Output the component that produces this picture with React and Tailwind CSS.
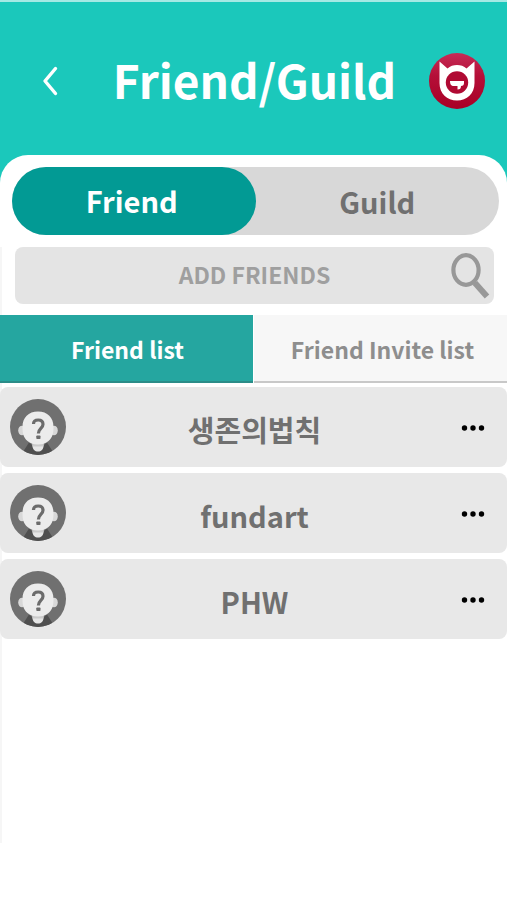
import { useState } from 'react'

const FRIENDS = [
  { id: 1, name: '생존의법칙' },
  { id: 2, name: 'fundart' },
  { id: 3, name: 'PHW' },
]

function BackIcon() {
  return (
    <svg className="w-6 h-8" viewBox="0 0 24 32" fill="none" stroke="currentColor" strokeWidth="3.4" strokeLinecap="round" strokeLinejoin="round">
      <path d="M17.500 3.500 7 16 17.500 28.500" />
    </svg>
  )
}

function MonsterLogo() {
  return (
    <svg className="w-14 h-14" viewBox="0 0 56 56">
      <defs>
        <linearGradient id="badge" x1="0" y1="0" x2="0" y2="1">
          <stop offset="0" stopColor="#c62c57" />
          <stop offset="0.4" stopColor="#b50f38" />
          <stop offset="1" stopColor="#a80026" />
        </linearGradient>
      </defs>
      <circle cx="28" cy="28" r="28" fill="url(#badge)" />
      <path
        d="M10.500 8.500 18.500 15.500C21 13 24.500 12 28 12S35 13 37.500 15.500L45.500 8.500V30
           C45.500 40.500 38 47.500 28 47.500S10.500 40.500 10.500 30Z"
        fill="#fff"
      />
      <circle cx="28" cy="29.500" r="11.200" fill="#b00a33" />
      <path d="M21 28H35V30C35 32 34 33 32 33C32 35.500 31 36.500 28.500 36.500V33H25C22 33 21 31 21 28Z" fill="#fff" />
    </svg>
  )
}

function SearchIcon() {
  return (
    <svg className="w-10 h-12" viewBox="0 0 40 48" fill="none" stroke="currentColor">
      <ellipse cx="16" cy="18" rx="12.600" ry="14.800" strokeWidth="4.200" />
      <path d="M23.500 29.500 26 32.500" strokeWidth="4" />
      <path d="M25 31 37 44.500" strokeWidth="6" />
    </svg>
  )
}

function Avatar() {
  return (
    <svg className="w-14 h-14 shrink-0" viewBox="0 0 56 56">
      <defs>
        <clipPath id="face">
          <circle cx="28" cy="28" r="28" />
        </clipPath>
      </defs>
      <g clipPath="url(#face)">
        <rect width="56" height="56" fill="#707070" />
        <path d="M11 56 19 43.500 23 47H33L37 43.500 45 56Z" fill="#4f4f4f" />
        <path d="M22.500 44H33.500V47C33.500 50.500 31 52.500 28 52.500S22.500 50.500 22.500 47Z" fill="#e6e6e6" />
        <path d="M22.500 44.500H33.500V47.500H22.500Z" fill="#cbcbcb" />
        <ellipse cx="12" cy="31.500" rx="3.800" ry="4.800" fill="#d8d8d8" />
        <ellipse cx="44" cy="31.500" rx="3.800" ry="4.800" fill="#d8d8d8" />
        <path d="M28 12.500C37.500 12.500 43.500 18.500 43.500 28C43.500 34.500 42.500 38.500 38.500 42C36 44.500 32 45.500 28 45.500S20 44.500 17.500 42C13.500 38.500 12.500 34.500 12.500 28C12.500 18.500 18.500 12.500 28 12.500Z" fill="#ececec" />
      </g>
      <path d="M23.500 25C23.500 22.500 25.300 21 28.200 21S33 22.600 33 25.200C33 29.500 28.400 29.500 28.400 34.500" fill="none" stroke="#6c6c6c" strokeWidth="3.200" />
      <rect x="26.300" y="36.500" width="4.200" height="3.600" rx="0.800" fill="#6c6c6c" />
    </svg>
  )
}

function MoreIcon() {
  return (
    <svg className="w-6 h-6" viewBox="0 0 24 24" fill="currentColor">
      <circle cx="3.500" cy="13" r="2.700" />
      <circle cx="12" cy="13" r="2.700" />
      <circle cx="20.500" cy="13" r="2.700" />
    </svg>
  )
}

function FriendRow({ name }) {
  return (
    <li className="grid grid-cols-[56px_1fr_56px] items-center h-20 px-2.5 rounded-lg bg-[#e8e8e8]">
      <Avatar />
      <span className="pt-1 pl-0.5 text-center text-[29px] leading-10 font-bold text-[#707070]">{name}</span>
      <button type="button" aria-label={`Options for ${name}`} className="flex justify-center pl-2 text-black">
        <MoreIcon />
      </button>
    </li>
  )
}

export default function App() {
  const [section, setSection] = useState('friend')
  const [list, setList] = useState('friends')

  return (
    <div className="min-h-screen bg-white font-['Noto_Sans_CJK_KR',sans-serif]">
      <div className="bg-[#1bc8bb] border-t-2 border-[#a5e9e4]">
        <header className="grid grid-cols-[56px_1fr_56px] items-center h-[153px] px-[22px] pt-1 text-white">
          <button type="button" aria-label="Back" className="flex justify-center">
            <BackIcon />
          </button>
          <h1 className="pb-1 pl-0.5 text-center text-[46px] leading-16 font-bold">Friend/Guild</h1>
          <a href="#home" aria-label="Home">
            <MonsterLogo />
          </a>
        </header>

        {/* Friend / guild switch */}
        <div className="rounded-t-[28px] bg-white pl-3 pr-2 py-3">
          <div className="grid grid-cols-2 h-[68px] rounded-full bg-[#d8d8d8] text-[29px] leading-10 font-bold">
            <button
              type="button"
              onClick={() => setSection('friend')}
              className={`rounded-full pb-0.5 pr-1 ${section === 'friend' ? 'bg-[#029a94] text-white' : 'text-[#707070]'}`}
            >
              Friend
            </button>
            <button
              type="button"
              onClick={() => setSection('guild')}
              className={`rounded-full ${section === 'guild' ? 'bg-[#029a94] text-white' : 'text-[#707070]'}`}
            >
              Guild
            </button>
          </div>
        </div>
      </div>

      <main className="min-h-[596px] bg-[linear-gradient(to_right,#f6f6f6_2px,transparent_2px)]">
        <form className="flex items-center h-[57px] ml-[15px] mr-[13px] rounded-lg bg-[#e4e4e4]" onSubmit={(e) => e.preventDefault()}>
          <input
            type="text"
            aria-label="Add friends"
            placeholder="ADD FRIENDS"
            className="flex-1 min-w-0 h-full pl-11 pb-1 text-center text-[23px] font-bold text-[#707070] placeholder:text-[#9f9f9f] outline-none"
          />
          <button type="submit" aria-label="Search" className="mr-1 text-[#989898]">
            <SearchIcon />
          </button>
        </form>

        {/* List tabs */}
        <div className="grid grid-cols-2 gap-px h-[68px] mt-[11px] mb-1 text-[23px] font-bold">
          <button
            type="button"
            onClick={() => setList('friends')}
            className={`border-b-2 pt-0.5 pl-0.5 ${list === 'friends' ? 'bg-[#25a6a0] border-[#2b8c88] text-white' : 'bg-[#f7f7f7] border-[#c8c8c8] text-[#8e8e8e]'}`}
          >
            Friend list
          </button>
          <button
            type="button"
            onClick={() => setList('invites')}
            className={`border-b-2 pt-0.5 pl-1 ${list === 'invites' ? 'bg-[#25a6a0] border-[#2b8c88] text-white' : 'bg-[#f7f7f7] border-[#c8c8c8] text-[#8e8e8e]'}`}
          >
            Friend Invite list
          </button>
        </div>

        <ul className="flex flex-col gap-1.5">
          {FRIENDS.map((friend) => (
            <FriendRow key={friend.id} name={friend.name} />
          ))}
        </ul>
      </main>
    </div>
  )
}
